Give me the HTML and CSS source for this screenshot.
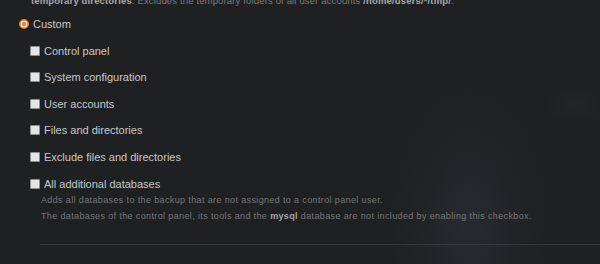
FILE: index.html
```html
<!DOCTYPE html>
<html lang="en">
<head>
  <meta charset="UTF-8">
  <title>Backup contents</title>
  <link rel="stylesheet" href="styles.css">
</head>
<body>
  <div class="panel">
    <p class="note"><b>temporary directories</b>: Excludes the temporary folders of all user accounts <b>/home/users/*/tmp/</b>.</p>

    <label class="radio-row">
      <span class="radio"><span class="radio-dot"></span></span>
      Custom
    </label>

    <div class="options">
      <label class="check-row"><span class="box"></span>Control panel</label>
      <label class="check-row"><span class="box"></span>System configuration</label>
      <label class="check-row"><span class="box"></span>User accounts</label>
      <label class="check-row"><span class="box"></span>Files and directories</label>
      <label class="check-row"><span class="box"></span>Exclude files and directories</label>
      <div class="option-block">
        <label class="check-row"><span class="box"></span>All additional databases</label>
        <p class="desc">Adds all databases to the backup that are not assigned to a control panel user.</p>
        <p class="desc">The databases of the control panel, its tools and the <b>mysql</b> database are not included by enabling this checkbox.</p>
      </div>
    </div>

    <hr class="divider">
  </div>
</body>
</html>
```

FILE: styles.css
```css
html, body {
  height: 100%;
}
body {
  margin: 0;
  font-family: 'Liberation Sans', Arial, sans-serif;
  color: #c8c8c8;
  background:
    radial-gradient(ellipse 80px 140px at 470px 225px, rgba(58, 66, 76, 0.3), transparent),
    radial-gradient(ellipse 30px 20px at 575px 105px, rgba(58, 66, 76, 0.15), transparent),
    #1e2022;
  overflow: hidden;
}
.panel {
  padding-left: 19px;
}
.note {
  margin: -5px 0 0 12px;
  font-size: 9.5px;
  line-height: 12px;
  letter-spacing: 0.15px;
  color: #7c7c7c;
  white-space: nowrap;
}
.note b {
  color: #a8a8a8;
}
.radio-row {
  display: flex;
  align-items: center;
  gap: 4px;
  margin-top: 9px;
  height: 16px;
  font-size: 11px;
}
.radio {
  width: 10px;
  height: 10px;
  border-radius: 50%;
  background: #e5761e;
  display: flex;
  align-items: center;
  justify-content: center;
}
.radio-dot {
  width: 4px;
  height: 4px;
  border-radius: 50%;
  background: #e5761e;
  box-shadow: 0 0 0 1.5px #f2e4d8;
}
.options {
  display: flex;
  flex-direction: column;
  gap: 10.67px;
  margin-top: 10.5px;
  padding-left: 11px;
}
.check-row {
  display: flex;
  align-items: center;
  gap: 4px;
  height: 16px;
  font-size: 11px;
}
.box {
  width: 8px;
  height: 8px;
  background: #e4e4e6;
  border: 1px solid #8e8e94;
  border-radius: 1px;
}
.desc {
  margin: 0 0 0 11px;
  font-size: 9px;
  line-height: 16px;
  letter-spacing: 0.37px;
  color: #777;
  white-space: nowrap;
}
.desc b {
  color: #a6a6a6;
}
.divider {
  margin: 20px 0 0 21px;
  border: none;
  border-top: 1px solid #37393c;
}
```
